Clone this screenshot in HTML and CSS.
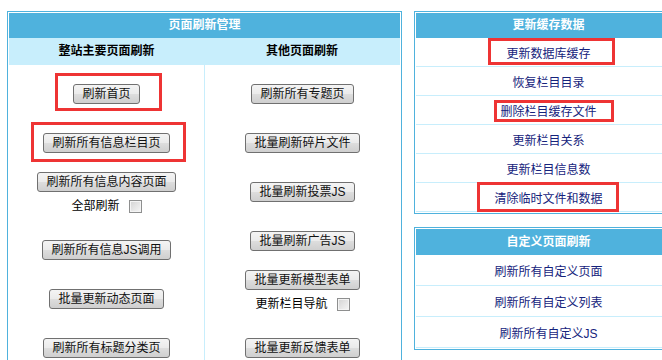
FILE: index.html
```html
<!DOCTYPE html>
<html lang="zh-CN">
<head>
    <meta charset="UTF-8">
    <meta name="viewport" content="width=device-width, initial-scale=1.0">
    <title>页面刷新管理</title>
    <link rel="stylesheet" href="styles.css">
</head>
<body>
    <div class="page">
        <div class="panel main-panel">
            <div class="panel-head">页面刷新管理</div>
            <div class="sub-heads">
                <div>整站主要页面刷新</div>
                <div>其他页面刷新</div>
            </div>
            <div class="cols">
                <div class="col">
                    <div class="cell"><button>刷新首页</button></div>
                    <div class="cell"><button>刷新所有信息栏目页</button></div>
                    <div class="cell tall">
                        <button>刷新所有信息内容页面</button>
                        <label class="check-line">全部刷新<input type="checkbox"></label>
                    </div>
                    <div class="cell"><button>刷新所有信息JS调用</button></div>
                    <div class="cell"><button>批量更新动态页面</button></div>
                    <div class="cell"><button>刷新所有标题分类页</button></div>
                </div>
                <div class="col col-right">
                    <div class="cell"><button>刷新所有专题页</button></div>
                    <div class="cell"><button>批量刷新碎片文件</button></div>
                    <div class="cell"><button>批量刷新投票JS</button></div>
                    <div class="cell"><button>批量刷新广告JS</button></div>
                    <div class="cell tall">
                        <button>批量更新模型表单</button>
                        <label class="check-line">更新栏目导航<input type="checkbox"></label>
                    </div>
                    <div class="cell"><button>批量更新反馈表单</button></div>
                </div>
            </div>
        </div>

        <div class="side">
            <div class="panel cache-panel">
                <div class="panel-head">更新缓存数据</div>
                <a class="link-row" href="#">更新数据库缓存</a>
                <a class="link-row" href="#">恢复栏目目录</a>
                <a class="link-row" href="#">删除栏目缓存文件</a>
                <a class="link-row" href="#">更新栏目关系</a>
                <a class="link-row" href="#">更新栏目信息数</a>
                <a class="link-row" href="#">清除临时文件和数据</a>
            </div>
            <div class="panel custom-panel">
                <div class="panel-head">自定义页面刷新</div>
                <a class="link-row" href="#">刷新所有自定义页面</a>
                <a class="link-row" href="#">刷新所有自定义列表</a>
                <a class="link-row" href="#">刷新所有自定义JS</a>
            </div>
        </div>

        <!-- red annotation boxes -->
        <div class="mark mark-home"></div>
        <div class="mark mark-class"></div>
        <div class="mark mark-db"></div>
        <div class="mark mark-del"></div>
        <div class="mark mark-tmp"></div>
    </div>
</body>
</html>
```

FILE: styles.css
```css
html, body {
    overflow: hidden;
}
body {
    margin: 0;
    font-family: "Liberation Sans", "Noto Sans CJK SC", sans-serif;
    font-size: 12px;
    color: #000;
    background-color: #fff;
}
.page {
    position: relative;
    display: flex;
    align-items: flex-start;
    gap: 12px;
    padding: 11px 0 0 7px;
}
.panel {
    flex-shrink: 0;
    border: 1px solid #4fb2dd;
    padding: 1px;
    background-color: #fff;
}
.panel-head {
    height: 25px;
    line-height: 25px;
    background-color: #4fb2dd;
    color: #fff;
    font-weight: bold;
    text-align: center;
}
.main-panel {
    width: 391px;
}
.sub-heads {
    display: grid;
    grid-template-columns: 195px 196px;
    height: 27px;
    line-height: 27px;
    background-color: #c8eefc;
    font-weight: bold;
    text-align: center;
}
.cols {
    display: grid;
    grid-template-columns: 195px 196px;
}
.col {
    padding-top: 4px;
    height: 320px;
}
.col-right {
    border-left: 1px solid #c8eefc;
}
.cell {
    height: 49px;
    display: flex;
    flex-direction: column;
    align-items: center;
    justify-content: center;
}
.cell.tall {
    height: 58px;
    justify-content: flex-start;
    padding-top: 5px;
    box-sizing: border-box;
}
button {
    font-family: "Liberation Sans", "Noto Sans CJK SC", sans-serif;
    font-size: 12px;
    line-height: 16px;
    padding: 1px 8.5px;
    color: #111;
    border: 1px solid #707070;
    border-radius: 3px;
    background: linear-gradient(#f4f4f4 0%, #ebebeb 48%, #dddddd 52%, #cfcfcf 100%);
    cursor: pointer;
}
button:hover {
    background: linear-gradient(#eaf6fd 0%, #d9f0fc 48%, #bee6fd 52%, #a7d9f5 100%);
}
.check-line {
    display: flex;
    align-items: center;
    margin-top: 5px;
    height: 18px;
    line-height: 18px;
}
.check-line input {
    appearance: none;
    -webkit-appearance: none;
    width: 13px;
    height: 13px;
    margin: 0 0 0 9px;
    border: 1px solid #8e8f8f;
    box-shadow: inset 0 0 0 1px #f4f4f4;
    background: linear-gradient(135deg, #d3d3d3 0%, #f6f6f6 100%);
}
.side {
    flex-shrink: 0;
    display: flex;
    flex-direction: column;
    gap: 13px;
}
.cache-panel,
.custom-panel {
    width: 265px;
}
.custom-panel .panel-head {
    height: 26px;
    line-height: 26px;
}
.link-row {
    display: flex;
    align-items: center;
    justify-content: center;
    height: 28px;
    border-bottom: 1px solid #c8eefc;
    color: #15237c;
    text-decoration: none;
}
.custom-panel .link-row {
    height: 30px;
}
.mark {
    position: absolute;
    box-sizing: border-box;
    border: 3px solid #ee3434;
}
.mark-home { left: 55px; top: 73px; width: 107px; height: 38px; }
.mark-class { left: 31px; top: 122px; width: 155px; height: 40px; }
.mark-db { left: 488px; top: 38px; width: 127px; height: 27px; }
.mark-del { left: 494px; top: 100px; width: 120px; height: 22px; }
.mark-tmp { left: 477px; top: 182px; width: 142px; height: 30px; }
```
